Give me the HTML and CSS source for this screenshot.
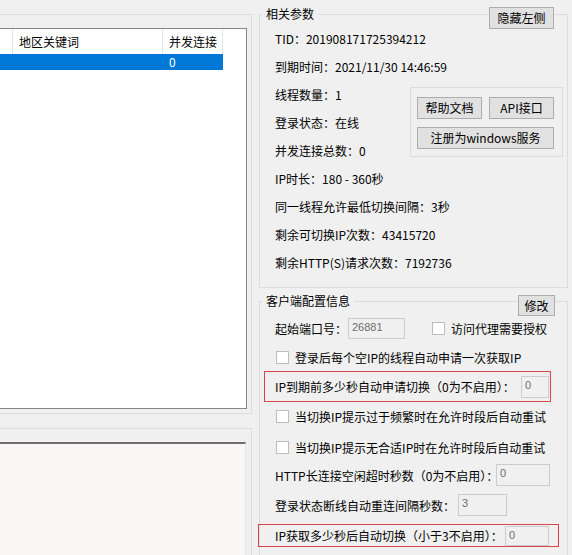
FILE: index.html
```html
<!DOCTYPE html>
<html lang="zh-CN">
<head>
<meta charset="utf-8">
<title>客户端</title>
<link rel="stylesheet" href="styles.css">
</head>
<body>
<div class="app">
  <div class="left">
    <div class="frame frame-top">
      <div class="list">
        <div class="list-head">
          <div class="hcell c1"></div>
          <div class="hcell c2">地区关键词</div>
          <div class="hcell c3">并发连接</div>
        </div>
        <div class="list-row sel">
          <div class="cell c1"></div>
          <div class="cell c2"></div>
          <div class="cell c3">0</div>
        </div>
      </div>
    </div>
    <div class="frame frame-bottom">
      <div class="log"></div>
    </div>
  </div>

  <div class="right">
    <div class="group g1">
      <span class="gtitle">相关参数</span>
      <div class="btn btn-hide">隐藏左侧</div>
      <div class="line">TID：201908171725394212</div>
      <div class="line">到期时间：2021/11/30 14:46:59</div>
      <div class="btnbox">
        <div class="btn btn-s">帮助文档</div>
        <div class="btn btn-s">API接口</div>
        <div class="btn btn-w">注册为windows服务</div>
      </div>
      <div class="line">线程数量：1</div>
      <div class="line">登录状态：在线</div>
      <div class="line">并发连接总数：0</div>
      <div class="line">IP时长：180 - 360秒</div>
      <div class="line">同一线程允许最低切换间隔：3秒</div>
      <div class="line">剩余可切换IP次数：43415720</div>
      <div class="line">剩余HTTP(S)请求次数：7192736</div>
    </div>

    <div class="group g2">
      <span class="gtitle">客户端配置信息</span>
      <div class="btn btn-edit">修改</div>

      <div class="row r1">
        <span class="lbl w73">起始端口号：</span>
        <span class="field f-port">26881</span>
        <span class="cb cb-auth"></span>
        <span class="cbl">访问代理需要授权</span>
      </div>
      <div class="row r2">
        <span class="cb"></span>
        <span class="cbl">登录后每个空IP的线程自动申请一次获取IP</span>
      </div>
      <div class="redbox red1">
        <span class="lbl w246">IP到期前多少秒自动申请切换（0为不启用）：</span>
        <span class="field f-exp">0</span>
      </div>
      <div class="row r4">
        <span class="cb"></span>
        <span class="cbl">当切换IP提示过于频繁时在允许时段后自动重试</span>
      </div>
      <div class="row r5">
        <span class="cb"></span>
        <span class="cbl">当切换IP提示无合适IP时在允许时段后自动重试</span>
      </div>
      <div class="row r6">
        <span class="lbl w221">HTTP长连接空闲超时秒数（0为不启用）：</span>
        <span class="field f-http">0</span>
      </div>
      <div class="row r7">
        <span class="lbl w183">登录状态断线自动重连间隔秒数：</span>
        <span class="field f-re">3</span>
      </div>
      <div class="redbox red2">
        <span class="lbl w230">IP获取多少秒后自动切换（小于3不启用）：</span>
        <span class="field f-get">0</span>
      </div>
    </div>
  </div>
</div>
</body>
</html>
```
FILE: styles.css
```css
html, body {
  margin: 0;
  padding: 0;
}
body {
  width: 572px;
  height: 555px;
  overflow: hidden;
  background: #f0f0f0;
  font-family: "Noto Sans CJK SC", "Noto Sans", sans-serif;
  font-size: 12px;
  color: #000;
}
.app {
  display: flex;
  height: 555px;
  overflow: hidden;
}

/* ---------- left side ---------- */
.left {
  width: 259px;
  flex: none;
  display: flex;
  flex-direction: column;
}
.frame {
  width: 252px;
  box-sizing: border-box;
  border: 1px solid #dcdcdc;
  border-left: none;
  padding-top: 13px;
}
.frame-top {
  margin-top: 14px;
  height: 400px;
  flex: none;
}
.frame-bottom {
  margin-top: 14px;
  flex: 1;
  border-bottom: none;
  display: flex;
  flex-direction: column;
}
.list {
  margin-left: -1px;
  width: 248px;
  height: 381px;
  box-sizing: border-box;
  border: 1px solid #828790;
  background: #fff;
}
.list-head {
  display: flex;
  height: 25px;
}
.hcell {
  box-sizing: border-box;
  border-right: 1px solid #e5e5e5;
  line-height: 25px;
  padding-left: 6px;
  white-space: nowrap;
}
.cell {
  box-sizing: border-box;
  padding-left: 6px;
  line-height: 16px;
}
.c1 { width: 13px; padding-left: 0; }
.c2 { width: 150px; }
.c3 { width: 60px; }
.list-row {
  display: flex;
  height: 16px;
  width: 223px;
}
.list-row.sel {
  background: #0078d7;
  color: #fff;
}
.log {
  margin-left: -1px;
  width: 247px;
  flex: 1;
  box-sizing: border-box;
  border-top: 2px solid #6e6e6e;
  border-right: 1px solid #e3e3e3;
  background: #f9f6f5;
}

/* ---------- right side ---------- */
.right {
  width: 309px;
  flex: none;
}
.group {
  position: relative;
  box-sizing: border-box;
  border: 1px solid #dcdcdc;
}
.gtitle {
  position: absolute;
  top: -9px;
  left: 2px;
  padding: 0 4px;
  line-height: 16px;
  background: #f0f0f0;
  white-space: nowrap;
}
.btn {
  box-sizing: border-box;
  background: #e1e1e1;
  border: 1px solid #adadad;
  text-align: center;
  white-space: nowrap;
}
.btn-hide {
  position: absolute;
  top: -8px;
  left: 229px;
  width: 65px;
  height: 22px;
  line-height: 20px;
}
.btn-edit {
  position: absolute;
  top: -7px;
  left: 258px;
  width: 37px;
  height: 21px;
  line-height: 19px;
}

.g1 {
  margin-top: 14px;
  height: 274px;
  padding: 10px 0 0 15px;
}
.line {
  height: 28px;
  line-height: 28px;
  white-space: nowrap;
}
.btnbox {
  float: right;
  margin: 6px 4px 0 0;
  width: 153px;
  height: 70px;
  box-sizing: border-box;
  border: 1px solid #dcdcdc;
  padding: 9px 0 0 6px;
  display: flex;
  flex-wrap: wrap;
  column-gap: 7px;
  row-gap: 8px;
  align-content: flex-start;
}
.btn-s {
  width: 65px;
  height: 22px;
  line-height: 20px;
}
.btn-w {
  width: 137px;
  height: 22px;
  line-height: 20px;
}

.g2 {
  margin-top: 13px;
  height: 254px;
  border-bottom: none;
  padding-left: 15px;
}
.row {
  display: flex;
  align-items: center;
  white-space: nowrap;
}
.lbl {
  flex: none;
  white-space: nowrap;
}
.w73 { width: 73px; }
.w183 { width: 183px; }
.w221 { width: 221px; }
.w230 { width: 230px; }
.w246 { width: 246px; }

.field {
  flex: none;
  box-sizing: border-box;
  border: 1px solid #cccccc;
  background: #f0f0f0;
  color: #6d6d6d;
  font-family: "Liberation Sans", sans-serif;
  font-size: 11px;
  line-height: 14px;
  padding: 1px 3px;
  align-self: flex-start;
}
.cb {
  flex: none;
  width: 13px;
  height: 13px;
  box-sizing: border-box;
  border: 1px solid #bdbdbd;
  background: #fff;
  margin: 0 6px 0 1px;
}
.cbl {
  white-space: nowrap;
}
.cb-auth {
  margin-left: 27px;
}

.r1 { margin-top: 16px; height: 21px; }
.r1 .field { width: 57px; height: 21px; }
.r2 { margin-top: 8px; height: 20px; }
.r4 { margin-top: 4px; height: 20px; }
.r5 { margin-top: 11px; height: 20px; }
.r6 { margin-top: 7px; height: 22px; }
.r6 .field { width: 54px; height: 22px; }
.r7 { margin-top: 8px; height: 22px; }
.r7 .field { width: 49px; height: 22px; }

.redbox {
  display: flex;
  align-items: center;
  box-sizing: border-box;
  border: 1px solid #d9434c;
  white-space: nowrap;
}
.red1 {
  margin-top: 4px;
  margin-left: -11px;
  width: 287px;
  height: 31px;
  padding-left: 10px;
}
.red1 .field {
  width: 28px;
  height: 22px;
  align-self: center;
}
.red2 {
  margin-top: 8px;
  margin-left: -17px;
  width: 301px;
  height: 23px;
  padding-left: 16px;
}
.red2 .field {
  width: 44px;
  height: 20px;
  align-self: center;
}
```
